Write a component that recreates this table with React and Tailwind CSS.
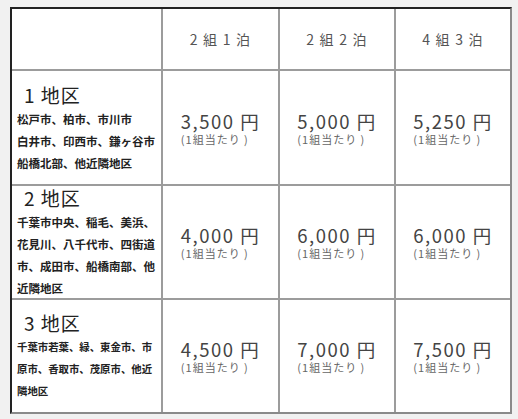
const rows = [
  {
    name: '1 地区',
    size: 'text-[11.5px]',
    lines: ['松戸市、柏市、市川市', '白井市、印西市、鎌ヶ谷市', '船橋北部、他近隣地区'],
    prices: ['3,500', '5,000', '5,250'],
  },
  {
    name: '2 地区',
    size: 'text-[11.5px]',
    lines: ['千葉市中央、稲毛、美浜、', '花見川、八千代市、四街道', '市、成田市、船橋南部、他', '近隣地区'],
    prices: ['4,000', '6,000', '6,000'],
  },
  {
    name: '3 地区',
    size: 'text-[10.4px]',
    lines: ['千葉市若葉、緑、東金市、市', '原市、香取市、茂原市、他近', '隣地区'],
    prices: ['4,500', '7,000', '7,500'],
  },
];

const heads = ['2 組 1 泊', '2 組 2 泊', '4 組 3 泊'];

function Price({ value }) {
  return (
    <div className="bg-white flex items-center justify-center">
      <div className="flex flex-col items-start">
        <span className="text-[18.5px] leading-[22px] tracking-[1.5px] text-[#444]">{value} 円</span>
        <span className="text-[11px] leading-[14px] tracking-[1px] text-[#666]">(1組当たり )</span>
      </div>
    </div>
  );
}

export default function App() {
  return (
    <div
      className="min-h-screen w-full bg-[#f1f1f1] pt-[7px] pl-[10px]"
      style={{ fontFamily: '"Noto Sans CJK JP", "Noto Sans", sans-serif' }}
    >
      <div className="w-[502px] border-t-2 border-l-2 border-t-[#222] border-l-[#222] border-r-2 border-b-2 border-r-[#8a8a8a] border-b-[#8a8a8a] bg-[#9c9c9c]">
        <div className="grid grid-cols-[149px_115px_114px_114px] grid-rows-[60px_113px_112px_112px] gap-[2px]">
          <div className="bg-white" />
          {heads.map((h) => (
            <div key={h} className="bg-white flex items-center justify-center text-[14px] tracking-[1.2px] text-[#555]">
              {h}
            </div>
          ))}
          {rows.map((r) => (
            <>
              <div key={r.name} className="bg-white flex flex-col justify-center pl-[5px]">
                <div className="pl-[7px] text-[19px] leading-[26px] tracking-[1px] text-[#222]">{r.name}</div>
                {r.lines.map((l) => (
                  <div key={l} className={`${r.size} leading-[22px] font-semibold whitespace-nowrap text-[#222]`}>
                    {l}
                  </div>
                ))}
              </div>
              {r.prices.map((p, i) => (
                <Price key={r.name + i} value={p} />
              ))}
            </>
          ))}
        </div>
      </div>
    </div>
  );
}
